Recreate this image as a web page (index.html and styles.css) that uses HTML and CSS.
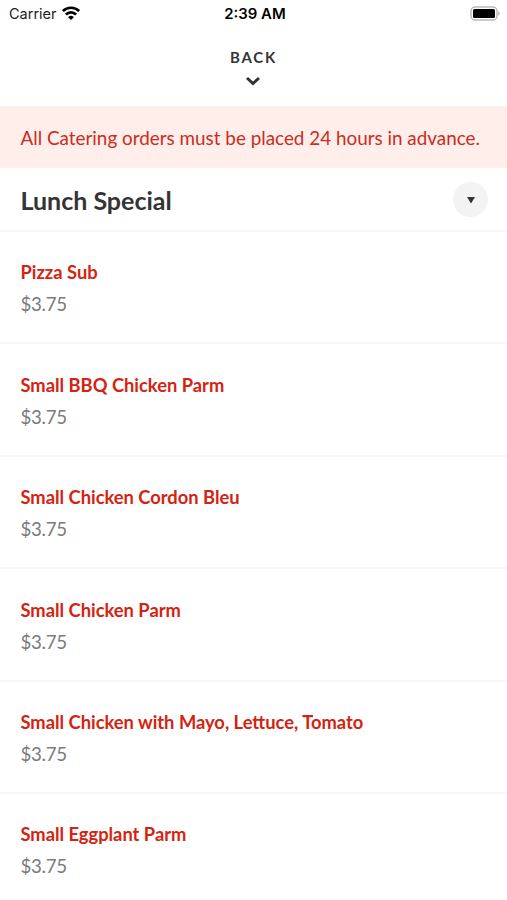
FILE: index.html
```html
<!DOCTYPE html>
<html lang="en">
<head>
<meta charset="utf-8">
<title>Lunch Special</title>
<link rel="stylesheet" href="styles.css">
</head>
<body>
<header class="status">
  <div class="carrier"><span>Carrier</span>
    <svg class="wifi" viewBox="0 0 18 14" width="18" height="14"><g fill="none" stroke="#000" stroke-width="2.7"><path d="M.9 5.1a11.5 11.5 0 0 1 16.2 0"/><path d="M3.9 8.5a7.2 7.2 0 0 1 10.2 0"/></g><path d="M9 14 6.1 11.2a4.1 4.1 0 0 1 5.8 0z"/></svg>
  </div>
  <div class="time">2:39 AM</div>
  <svg class="battery" viewBox="0 0 31 15" width="31" height="15"><rect x="1" y="1" width="26" height="13" rx="4" fill="none" stroke="#bbb" stroke-width="1.5"/><rect x="3" y="3" width="22" height="9" rx="1.5"/><path d="M28.3 5.3a2.6 2.6 0 0 1 0 4.6z" fill="#aaa"/></svg>
</header>
<nav class="back">
  <span>BACK</span>
  <svg viewBox="0 0 16 10" width="16" height="10"><path d="m2 2 6 5.5L14 2" fill="none" stroke="#333" stroke-width="3"/></svg>
</nav>
<p class="notice">All Catering orders must be placed 24 hours in advance.</p>
<section>
  <div class="heading"><h1>Lunch Special</h1>
    <button class="toggle" aria-label="Toggle section"><svg viewBox="0 0 10 8" width="10" height="8"><path d="M1 1h8L5 7.5z" fill="#333"/></svg></button>
  </div>
  <ul class="menu">
    <li><h2>Pizza Sub</h2><p>$3.75</p></li>
    <li><h2>Small BBQ Chicken Parm</h2><p>$3.75</p></li>
    <li><h2>Small Chicken Cordon Bleu</h2><p>$3.75</p></li>
    <li><h2>Small Chicken Parm</h2><p>$3.75</p></li>
    <li><h2>Small Chicken with Mayo, Lettuce, Tomato</h2><p>$3.75</p></li>
    <li><h2>Small Eggplant Parm</h2><p>$3.75</p></li>
  </ul>
</section>
</body>
</html>
```
FILE: styles.css
```css
* { box-sizing: border-box; }
body, h1, h2, p, ul { margin: 0; padding: 0; }
html { overflow: hidden; }
body { height: 900px; overflow: hidden; background: #fff; color: #333436; font-family: Lato, sans-serif; }
.status { display: grid; grid-template-columns: 1fr auto 1fr; align-items: center; height: 27px; padding: 0 6px 0 9px; color: #000; font: 14.5px/28px Inter, sans-serif; }
.carrier { display: flex; align-items: center; gap: 5px; color: #222; }
.wifi { margin-top: -2px; }
.time { font-size: 14.9px; font-weight: 600; }
.battery { justify-self: end; margin-top: -1px; }
.back { display: flex; flex-direction: column; align-items: center; height: 79px; padding-top: 21px; font-size: 15px; line-height: 18px; font-weight: 700; letter-spacing: 1.7px; }
.back svg { margin: 10px 1px 0 0; }
.notice { height: 62px; padding: 0 20.5px; background: #ffeeea; color: #cb2c1d; font-size: 18.88px; line-height: 64px; white-space: nowrap; }
.heading { display: flex; align-items: center; justify-content: space-between; height: 64px; padding: 0 19px 0 20.5px; border-bottom: 2px solid #f7f7f7; }
h1 { margin-top: 2px; font-size: 25px; line-height: 30px; font-weight: 700; }
.toggle { display: grid; place-items: center; width: 35px; height: 35px; margin-top: 1px; padding: 0; border: 0; border-radius: 50%; background: #f3f3f3; }
.menu { list-style: none; }
.menu li { height: 112.4px; padding: 28.4px 20.5px 0; border-bottom: 2px solid #f7f7f7; }
h2 { color: #d42310; font-size: 18.32px; line-height: 25px; font-weight: 700; }
.menu p { margin-top: 6px; color: #7b7b7b; font-size: 18.7px; line-height: 26px; letter-spacing: -.3px; }
```
